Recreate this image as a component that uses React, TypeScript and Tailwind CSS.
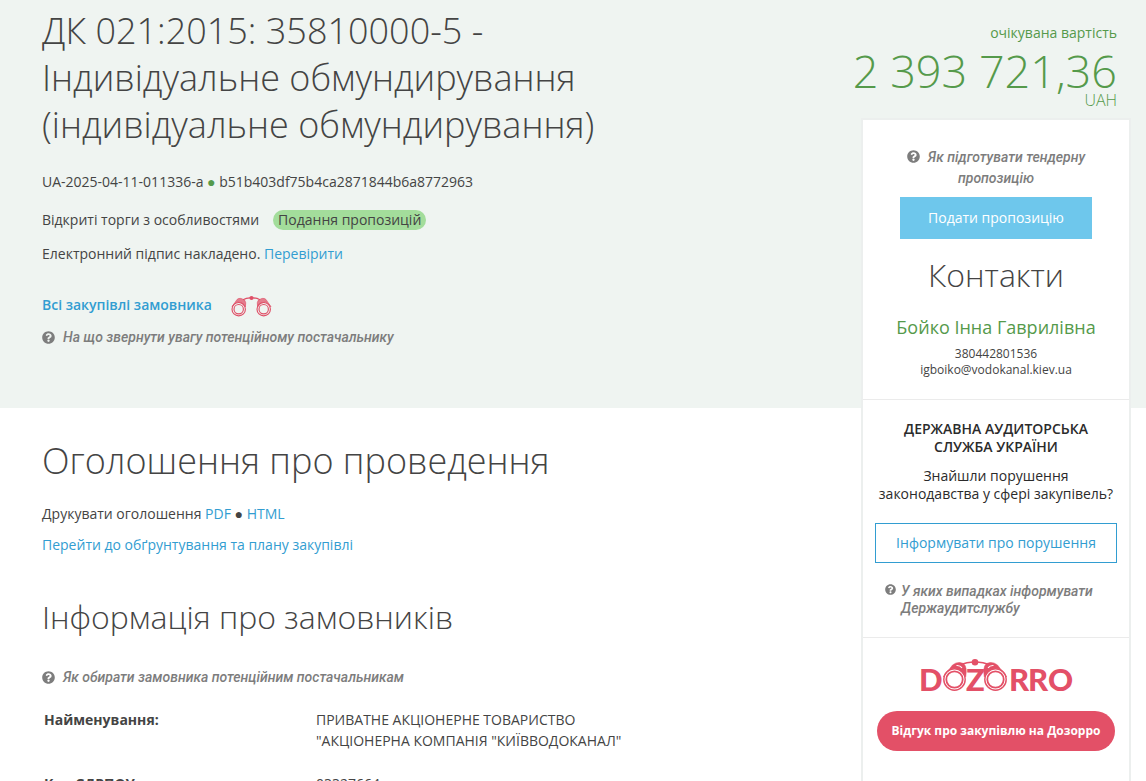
import { ReactNode } from 'react';
import { FaQuestionCircle } from 'react-icons/fa';

const customer = [
  { label: 'Найменування:', value: 'ПРИВАТНЕ АКЦІОНЕРНЕ ТОВАРИСТВО "АКЦІОНЕРНА КОМПАНІЯ "КИЇВВОДОКАНАЛ"' },
  { label: 'Код ЄДРПОУ:', value: '03327664' },
];

function Help({ children }: { children: ReactNode }) {
  return (
    <a href="#help" className="flex items-center gap-2 font-['Roboto',sans-serif] text-sm leading-5 font-medium italic text-[#7d7d7d]">
      <FaQuestionCircle className="size-[13px] shrink-0" aria-hidden="true" />
      <span>{children}</span>
    </a>
  );
}

function Lens({ cx, cy, r }: { cx: number; cy: number; r: number }) {
  return (
    <>
      <circle cx={cx} cy={cy} r={r} fill="none" strokeWidth={r * 0.17} />
      <circle cx={cx} cy={cy} r={r * 0.7} fill="none" strokeWidth={r * 0.17} />
    </>
  );
}

function Binoculars() {
  return (
    <svg viewBox="0 -2 42 24" className="h-6 w-[42px]" stroke="#df4f67" fill="#df4f67" aria-hidden="true">
      <path d="M2 12 L7 4.5 Q8.500 3 11 3.400 L14.500 5 Q16.500 7 15.400 12 Q12 6.500 7.500 7 Q4 7.500 2 12Z" fillOpacity=".72" strokeWidth=".6" />
      <path d="M41 12 L36 4.500 Q34.500 3 32 3.400 L28.500 5 Q26.500 7 27.600 12 Q31 6.500 35.500 7 Q39 7.500 41 12Z" fillOpacity=".72" strokeWidth=".6" />
      <path d="M13 4.800 Q17 2.500 21.500 3 Q26 2.500 30 4.800" fill="none" strokeWidth="1.300" />
      <circle cx="21.500" cy="3" r="2.100" stroke="none" />
      <Lens cx={8.7} cy={14.2} r={6.7} />
      <Lens cx={33.7} cy={14.2} r={6.7} />
    </svg>
  );
}

function DozorroLogo() {
  return (
    <svg viewBox="0 0 156 40" className="h-10 w-[156px]" role="img" aria-label="Dozorro">
      <g stroke="#e35067" fill="#e35067">
        <path d="M25.300 19 L34.500 7 Q38 4 42 4.500 L45.500 5.500 Q49.500 9 47.700 19 Q44 10.500 36 10.500 Q28.500 10.500 25.300 19Z" strokeWidth=".5" />
        <path d="M88.700 19 L79.500 7 Q76 4 72 4.500 L68.500 5.500 Q64.500 9 66.300 19 Q70 10.500 78 10.500 Q85.500 10.500 88.700 19Z" strokeWidth=".5" />
        <path d="M43 6.500 Q50 3.500 57 4 Q64 3.500 71 6.500" fill="none" strokeWidth="1.500" />
        <circle cx="57" cy="4.200" r="3.300" stroke="none" />
        <path d="M38.500 7.500 Q42 7.200 44 9.800 M75.500 7.500 Q72 7.200 70 9.800" fill="none" stroke="#fff" strokeWidth="1.100" />
        <circle cx="36.500" cy="21.500" r="10.700" fill="#fff" strokeWidth="1.400" />
        <circle cx="36.500" cy="21.500" r="8.200" fill="none" strokeWidth="1.800" />
        <circle cx="77.500" cy="21.500" r="10.700" fill="#fff" strokeWidth="1.400" />
        <circle cx="77.500" cy="21.500" r="8.200" fill="none" strokeWidth="1.800" />
      </g>
      <g fill="#e35067" fontFamily="Lato, sans-serif" fontWeight="900" fontSize="31">
        <text x="1" y="33">D</text>
        <text x="48" y="33">Z</text>
        <text x="91" y="33">R</text>
        <text x="110" y="33">R</text>
        <text x="130" y="33">O</text>
      </g>
    </svg>
  );
}

function HeroContent() {
  return (
    <header className="col-start-1 row-start-1 flex flex-col items-start pt-[7px] pb-[61px] pl-[42px]">
      <h1 className="max-w-[580px] text-[36px] leading-[47px] font-light">
        ДК 021:2015: 35810000-5 - Індивідуальне обмундирування (індивідуальне обмундирування)
      </h1>
      <p className="mt-6 leading-5">
        UA-2025-04-11-011336-a <span className="text-[#559a4b]">●</span> b51b403df75b4ca2871844b6a8772963
      </p>
      <p className="mt-[18px] flex gap-[14px] leading-5">
        <span>Відкриті торги з особливостями</span>
        <span className="rounded-full bg-[#a3dd9b] px-[5px]">Подання пропозицій</span>
      </p>
      <p className="mt-[14px] leading-5">
        Електронний підпис накладено. <a href="#signature" className="text-[#329dd1]">Перевірити</a>
      </p>
      <div className="mt-[29px] flex items-center gap-[18px]">
        <a href="#all" className="leading-5 font-semibold text-[#329dd1]">Всі закупівлі замовника</a>
        <a href="#dozorro" aria-label="Dozorro"><Binoculars /></a>
      </div>
      <div className="mt-[10px]">
        <Help>На що звернути увагу потенційному постачальнику</Help>
      </div>
    </header>
  );
}

function Sidebar() {
  return (
    <aside className="col-start-2 row-span-2 row-start-1 mr-[15px] flex flex-col pt-[23px]">
      <div className="flex flex-col items-end pr-[14px] whitespace-nowrap text-[#559a4b]">
        <span className="leading-5">очікувана вартість</span>
        <span className="mt-[5px] text-[45px] leading-[46px] font-light">2 393 721,36</span>
        <span className="text-base leading-3 font-light">UAH</span>
      </div>
      <div className="mt-3 grow border-2 border-b-0 border-[#ecefee] bg-white pb-10 text-center">
        <section className="flex flex-col items-center border-b border-[#ebebeb] pt-[27px] pb-[21px]">
          <a href="#prepare" className="max-w-[190px] font-['Roboto',sans-serif] text-sm leading-[21px] font-medium italic text-[#7d7d7d]">
            <FaQuestionCircle className="mr-2 inline size-[13px] align-[-1px]" aria-hidden="true" />
            Як підготувати тендерну пропозицію
          </a>
          <button type="button" className="mt-2 h-[42px] w-48 bg-[#6ec7ec] text-white">Подати пропозицію</button>
          <h2 className="mt-4 text-[32px] leading-10 font-light">Контакти</h2>
          <p className="mt-5 text-lg leading-6 text-[#559a4b]">Бойко Інна Гаврилівна</p>
          <p className="mt-[7px] text-xs leading-4">380442801536</p>
          <p className="text-xs leading-4">igboiko@vodokanal.kiev.ua</p>
        </section>
        <section className="flex flex-col border-b border-[#ebebeb] px-3 pt-5 pb-5">
          <h3 className="px-4 leading-[18px] font-semibold text-[#2b2b2b]">ДЕРЖАВНА АУДИТОРСЬКА СЛУЖБА УКРАЇНИ</h3>
          <p className="mt-[11px] leading-[18px] text-[#2b2b2b]">
            Знайшли порушення<br />законодавства у сфері закупівель?
          </p>
          <button type="button" className="mt-5 h-10 border border-[#329dd1] text-[#329dd1]">Інформувати про порушення</button>
          <a href="#cases" className="mt-5 ml-[10px] flex gap-[5px] text-left font-['Roboto',sans-serif] text-sm leading-[17px] font-medium italic text-[#7d7d7d]">
            <FaQuestionCircle className="mt-px size-[11px] shrink-0" aria-hidden="true" />
            <span>У яких випадках інформувати Держаудитслужбу</span>
          </a>
        </section>
        <section className="flex flex-col items-center px-[14px] pt-5">
          <DozorroLogo />
          <button type="button" className="mt-[13px] h-10 w-full rounded-full bg-[#e35067] text-xs font-bold text-white">
            Відгук про закупівлю на Дозорро
          </button>
        </section>
      </div>
    </aside>
  );
}

export default function App() {
  return (
    <div className="grid min-h-screen grid-cols-[minmax(0,1fr)_285px] grid-rows-[auto_1fr] bg-white font-['Open_Sans',sans-serif] text-sm text-[#444]">
      <div className="col-span-2 col-start-1 row-start-1 bg-[#eff4f1]" />
      <HeroContent />
      <Sidebar />
      <main className="col-start-1 row-start-2 pt-[29px] pl-[42px]">
        <h2 className="text-[36px] leading-[47px] font-light">Оголошення про проведення</h2>
        <p className="mt-5 leading-5">
          Друкувати оголошення <a href="#pdf" className="text-[#329dd1]">PDF</a> ● <a href="#html" className="text-[#329dd1]">HTML</a>
        </p>
        <p className="mt-[11px] leading-5">
          <a href="#plan" className="text-[#329dd1]">Перейти до обґрунтування та плану закупівлі</a>
        </p>
        <h2 className="mt-[41px] text-[32px] leading-[42px] font-light">Інформація про замовників</h2>
        <div className="mt-[29px]">
          <Help>Як обирати замовника потенційним постачальникам</Help>
        </div>
        <table className="mt-[11px] text-left leading-[21px]">
          <tbody>
            {customer.map((row) => (
              <tr key={row.label} className="align-top">
                <th scope="row" className="w-[274px] py-[11px] pl-[2px] font-bold">{row.label}</th>
                <td className="w-[320px] py-[11px]">{row.value}</td>
              </tr>
            ))}
          </tbody>
        </table>
      </main>
    </div>
  );
}
